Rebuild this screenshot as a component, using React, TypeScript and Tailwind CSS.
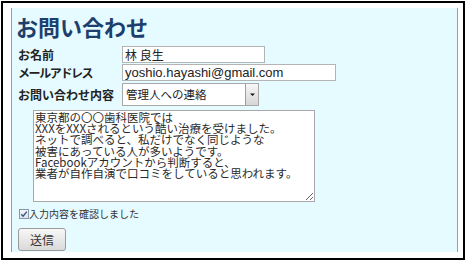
import React from "react";

const jp = { fontFamily: '"Noto Sans CJK JP", "Noto Sans", sans-serif' };

export default function App() {
  const body =
    "東京都の〇〇歯科医院では\nXXXをXXXされるという酷い治療を受けました。\nネットで調べると、私だけでなく同じような\n被害にあっている人が多いようです。\nFacebookアカウントから判断すると、\n業者が自作自演で口コミをしていると思われます。";
  return (
    <div className="w-[467px] h-[262px] bg-white pt-px pl-px" style={jp}>
      <div className="w-[464px] h-[259px] border-2 border-black pt-[5px] pl-[8px]">
        <div className="w-[447px] h-[244px] bg-[#e6fbff] border-x border-[#9c9c9c] flex flex-col">
          <h1 className="pl-[4px] mt-[5px] text-[22px] leading-[26px] font-bold text-[#1d3f6e]">
            お問い合わせ
          </h1>
          <div className="pl-[6px] flex flex-col text-[#222]">
            <div className="mt-[7px] flex items-center h-[17px]">
              <div className="w-[104px] text-[12px] font-bold leading-none">お名前</div>
              <div className="w-[143px] h-[17px] bg-white border border-[#b4b4b4] flex items-center pl-[2px] text-[12px] leading-none">
                林 良生
              </div>
            </div>
            <div className="mt-[1px] flex items-center h-[17px]">
              <div className="w-[104px] text-[12px] font-bold leading-none tracking-[-1.4px]">メールアドレス</div>
              <div
                className="w-[214px] h-[17px] bg-white border border-[#b4b4b4] flex items-center pl-[2px] text-[13px] leading-none"
                style={{ fontFamily: '"Liberation Sans", Arial, sans-serif' }}
              >
                yoshio.hayashi@gmail.com
              </div>
            </div>
            <div className="mt-[2px] flex items-center h-[23px]">
              <div className="w-[104px] text-[12px] font-bold leading-none">お問い合わせ内容</div>
              <div className="w-[137px] h-[23px] bg-white border border-[#a8a8a8] flex items-stretch">
                <div className="flex-1 flex items-center pl-[3px] text-[11.5px] leading-none">管理人への連絡</div>
                <div className="w-[13px] border-l border-[#a0a0a0] bg-gradient-to-b from-[#f7f7f7] to-[#d6d6d6] flex items-center justify-center">
                  <svg width="7" height="5" viewBox="0 0 7 5">
                    <path d="M1 1.5 H6 L3.5 4 Z" fill="#111" />
                  </svg>
                </div>
              </div>
            </div>
            <textarea
              readOnly
              defaultValue={body}
              className="mt-[4px] ml-[15px] w-[282px] h-[92px] bg-white border border-[#a8a8a8] p-[1px] text-[11.5px] leading-[11.2px] text-[#2a2a2a] outline-none overflow-hidden"
              style={jp}
            />
            <div className="mt-[5px] flex items-center h-[14px]">
              <span className="ml-[1px] w-[10px] h-[10px] border border-[#8898ae] bg-gradient-to-b from-[#f2f4f8] to-[#dfe5ee] flex items-center justify-center">
                <svg width="8" height="8" viewBox="0 0 8 8">
                  <path d="M1.2 4.2 L3.1 6.2 L6.8 1.6" stroke="#3b5680" strokeWidth="1.4" fill="none" />
                </svg>
              </span>
              <span className="text-[10px] leading-none text-[#333]">入力内容を確認しました</span>
            </div>
            <div className="mt-[7px]">
              <div className="w-[48px] h-[23px] rounded-[3px] border border-[#9a9a9a] bg-gradient-to-b from-[#f8f8f8] to-[#d9d9d9] flex items-center justify-center text-[12px] leading-none text-[#333]">
                送信
              </div>
            </div>
          </div>
        </div>
      </div>
    </div>
  );
}
